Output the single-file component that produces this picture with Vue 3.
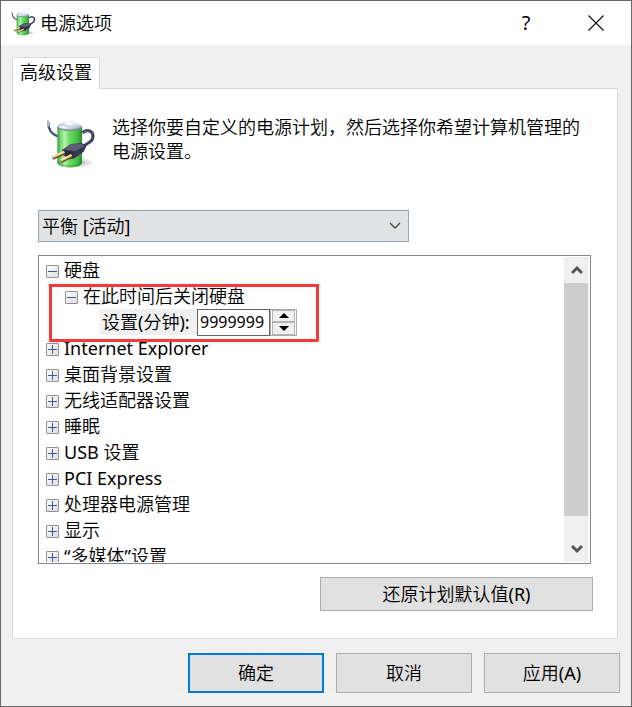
<template>
  <div class="window">
    <svg class="defs" aria-hidden="true">
      <defs>
        <linearGradient id="cell" x1="0" x2="1" y1="0" y2="0">
          <stop offset="0" stop-color="#3d9a45" />
          <stop offset="0.12" stop-color="#6fd36d" />
          <stop offset="0.3" stop-color="#b8f2ad" />
          <stop offset="0.48" stop-color="#6edb64" />
          <stop offset="0.8" stop-color="#46c046" />
          <stop offset="1" stop-color="#278a34" />
        </linearGradient>
        <linearGradient id="metal" x1="0" x2="1" y1="0" y2="1">
          <stop offset="0" stop-color="#8d9ba8" />
          <stop offset="0.45" stop-color="#f4f9ff" />
          <stop offset="1" stop-color="#8794a3" />
        </linearGradient>
        <radialGradient id="shade">
          <stop offset="0" stop-color="#777" stop-opacity="0.6" />
          <stop offset="1" stop-color="#777" stop-opacity="0" />
        </radialGradient>
        <symbol id="battery" viewBox="30 26 150 150">
          <ellipse cx="126" cy="157" rx="48" ry="15" fill="url(#shade)" />
          <path d="M37 38Q37 68 65 78" fill="none" stroke="#4c5570" stroke-width="7" stroke-linecap="round" />
          <path d="M36 32L37 46" stroke="#b4bac6" stroke-width="6" stroke-linecap="round" />
          <path d="M64 50V158Q68 172 101 172T138 158V50Z" fill="url(#cell)" />
          <path d="M65 155Q74 167 101 167T137 155" fill="none" stroke="#23802d" stroke-width="5" opacity="0.4" />
          <ellipse cx="101" cy="50" rx="37" ry="12" fill="#7b8d92" />
          <ellipse cx="101" cy="47" rx="35" ry="11" fill="url(#metal)" />
          <path d="M81 44Q84 32 101 32T121 44Q114 52 101 52T81 44Z" fill="#cad8ed" />
          <ellipse cx="101" cy="38" rx="15" ry="6" fill="#f5faff" />
          <path d="M139 67Q158 54 169 68Q176 88 157 98L139 109" fill="none" stroke="#3c435d" stroke-width="9" />
          <path d="M142 66Q158 58 166 71" fill="none" stroke="#828ba8" stroke-width="2" />
          <path d="M79 118L105 101L138 98L151 108L143 124L116 144L101 147L79 132Z" fill="#34374c" />
          <path d="M82 117L106 102L137 100L146 108L118 123Z" fill="#5a5e76" />
          <path d="M79 118L114 126L113 144L101 147L79 132Z" fill="#282b3f" />
          <path d="M86 128L50 144M108 137L74 154" stroke="#75532a" stroke-width="10" />
          <path d="M85 124L50 140M107 134L74 150" stroke="#f0d9a2" stroke-width="7" />
        </symbol>
      </defs>
    </svg>

    <header class="title-bar">
      <svg class="title-icon" aria-hidden="true"><use href="#battery" /></svg>
      <h1>电源选项</h1>
      <button class="caption-btn" type="button" aria-label="帮助">?</button>
      <button class="caption-btn close" type="button" aria-label="关闭">
        <svg width="16" height="16" viewBox="0 0 16 16"><path d="M0.5 0.5L15.5 15.5M15.5 0.5L0.5 15.5" stroke="#111" stroke-width="1.2" /></svg>
      </button>
    </header>

    <main class="content">
      <div class="tabs" role="tablist">
        <button class="tab" type="button" role="tab" aria-selected="true">高级设置</button>
      </div>

      <section class="panel">
        <div class="intro">
          <svg class="intro-icon" aria-hidden="true"><use href="#battery" /></svg>
          <p>选择你要自定义的电源计划，然后选择你希望计算机管理的电源设置。</p>
        </div>

        <div class="plan">
          <select v-model="plan" aria-label="电源计划">
            <option>平衡 [活动]</option>
          </select>
          <svg class="plan-arrow" width="12" height="8" viewBox="0 0 12 8"><path d="M1 1L6 6L11 1" fill="none" stroke="#444" stroke-width="1.3" /></svg>
        </div>

        <div class="tree-box">
          <ul ref="tree" class="tree">
            <li v-for="item in items" :key="item.name">
              <div class="row">
                <button class="toggle" type="button" :aria-label="item.name" :aria-expanded="item.open" @click="item.open = !item.open">
                  <svg width="9" height="9" viewBox="0 0 9 9"><path :d="item.open ? minus : plus" stroke="#3c569e" /></svg>
                </button>
                <span>{{ item.name }}</span>
              </div>
              <div v-if="item.timeout && item.open" class="branch">
                <div class="row">
                  <button class="toggle" type="button" aria-label="在此时间后关闭硬盘" :aria-expanded="timeoutOpen" @click="timeoutOpen = !timeoutOpen">
                    <svg width="9" height="9" viewBox="0 0 9 9"><path :d="timeoutOpen ? minus : plus" stroke="#3c569e" /></svg>
                  </button>
                  <span>在此时间后关闭硬盘</span>
                </div>
                <div v-if="timeoutOpen" class="row setting">
                  <label for="minutes">设置(分钟):</label>
                  <input id="minutes" v-model.number="minutes" type="text" />
                  <div class="spin">
                    <button type="button" aria-label="增加" @click="minutes++">
                      <svg width="10" height="5" viewBox="0 0 10 5"><path d="M0 5L5 0L10 5Z" /></svg>
                    </button>
                    <button type="button" aria-label="减少" @click="minutes--">
                      <svg width="10" height="5" viewBox="0 0 10 5"><path d="M0 0L5 5L10 0Z" /></svg>
                    </button>
                  </div>
                </div>
                <div class="highlight"></div>
              </div>
            </li>
          </ul>
          <div class="scrollbar">
            <button type="button" aria-label="向上滚动" @click="scroll(-26)">
              <svg width="12" height="10" viewBox="0 0 12 10"><path d="M1 8L6 3L11 8" fill="none" stroke="#555" stroke-width="3" /></svg>
            </button>
            <div class="track"><div class="thumb"></div></div>
            <button type="button" aria-label="向下滚动" @click="scroll(26)">
              <svg width="12" height="10" viewBox="0 0 12 10"><path d="M1 2L6 7L11 2" fill="none" stroke="#555" stroke-width="3" /></svg>
            </button>
          </div>
        </div>

        <button class="btn restore" type="button">还原计划默认值(R)</button>
      </section>
    </main>

    <footer class="actions">
      <button class="btn primary" type="button">确定</button>
      <button class="btn" type="button">取消</button>
      <button class="btn" type="button">应用(A)</button>
    </footer>
  </div>
</template>

<script setup>
import { ref } from 'vue'

const plus = 'M0 4.5H9M4.5 0V9'
const minus = 'M0 4.5H9'

const plan = ref('平衡 [活动]')
const minutes = ref(9999999)
const timeoutOpen = ref(true)
const tree = ref(null)

const items = ref([
  { name: '硬盘', open: true, timeout: true },
  { name: 'Internet Explorer', open: false },
  { name: '桌面背景设置', open: false },
  { name: '无线适配器设置', open: false },
  { name: '睡眠', open: false },
  { name: 'USB 设置', open: false },
  { name: 'PCI Express', open: false },
  { name: '处理器电源管理', open: false },
  { name: '显示', open: false },
  { name: '“多媒体”设置', open: false }
])

function scroll(amount) {
  tree.value.scrollTop += amount
}
</script>

<style>
body {
  margin: 0;
}
</style>

<style scoped>
* {
  box-sizing: border-box;
}

.window {
  display: flex;
  flex-direction: column;
  height: 100vh;
  border: 1px solid #6b6b6b;
  background: #f0f0f0;
  color: #000;
  font-family: "Noto Sans", "Noto Sans CJK SC DemiLight", "Noto Sans CJK SC", sans-serif;
  font-size: 18px;
  line-height: 24px;
}

button,
input,
select {
  margin: 0;
  padding: 0;
  font: inherit;
  color: inherit;
}

.defs {
  position: absolute;
  width: 0;
  height: 0;
}

.title-bar {
  display: flex;
  align-items: center;
  height: 44px;
  padding-left: 10px;
  background: #fff;
}

.title-icon {
  width: 25px;
  height: 25px;
  margin-right: 4px;
}

.title-bar h1 {
  flex: 1;
  margin: 0;
  font-size: 18px;
  font-weight: 400;
}

.caption-btn {
  display: flex;
  align-items: center;
  justify-content: center;
  width: 70px;
  height: 44px;
  border: none;
  background: none;
  font-size: 20px;
}

.content {
  display: flex;
  flex: 1;
  flex-direction: column;
  min-height: 0;
  padding: 12px 13px 0 11px;
}

.tabs {
  display: flex;
}

.tab {
  z-index: 1;
  height: 32px;
  margin-bottom: -1px;
  padding: 0 7px 3px;
  border: 1px solid #d9d9d9;
  border-bottom: none;
  background: #fff;
}

.panel {
  display: flex;
  flex: 1;
  flex-direction: column;
  min-height: 0;
  padding: 26px 25px 27px;
  border: 1px solid #d9d9d9;
  background: #fff;
}

.intro {
  display: flex;
  gap: 16px;
  height: 95px;
  padding-left: 8px;
}

.intro-icon {
  flex: none;
  width: 50px;
  height: 50px;
  margin-top: 4px;
}

.intro p {
  margin: 0;
}

.plan {
  position: relative;
  width: 67%;
  margin-bottom: 13px;
}

.plan select {
  display: block;
  width: 100%;
  height: 32px;
  padding: 0 3px;
  border: 1px solid #9aa5b0;
  border-radius: 0;
  background: #e1e2e3;
  appearance: none;
}

.plan-arrow {
  position: absolute;
  top: 12px;
  right: 8px;
  pointer-events: none;
}

.tree-box {
  display: flex;
  flex: 1;
  min-height: 0;
  margin-right: 1px;
  padding: 1px;
  border: 1px solid #828790;
}

.tree {
  flex: 1;
  margin: 0;
  padding: 0 0 0 6px;
  overflow: hidden;
  list-style: none;
}

.row {
  display: flex;
  align-items: center;
  gap: 5px;
  height: 26px;
}

.toggle {
  display: flex;
  align-items: center;
  justify-content: center;
  width: 13px;
  height: 13px;
  margin-top: 2px;
  border: 1px solid #919191;
  border-radius: 1px;
  background: linear-gradient(135deg, #fff, #ddd);
}

.branch {
  position: relative;
  padding-left: 19px;
}

.setting {
  gap: 0;
  padding-left: 35px;
}

.setting label {
  width: 97px;
  height: 26px;
  padding-top: 1px;
  padding-left: 2px;
  background: #f0f0f0;
  white-space: nowrap;
}

.setting input {
  width: 73px;
  height: 27px;
  padding: 0 2px;
  border: 1px solid #646464;
  border-radius: 0;
  background: #fff;
  font-size: 16px;
}

.spin {
  display: flex;
  flex-direction: column;
  width: 27px;
  height: 27px;
  padding: 0 1px;
  border: 1px solid #aaa;
}

.spin button {
  display: flex;
  flex: 1;
  align-items: center;
  justify-content: center;
  border: 1px solid #b4b4b4;
  background: #f0f0f0;
}

.highlight {
  position: absolute;
  top: 1px;
  left: 3px;
  width: 270px;
  height: 58px;
  border: 3px solid #fb3838;
  pointer-events: none;
}

.scrollbar {
  display: flex;
  flex-direction: column;
  width: 25px;
  background: #f0f0f0;
}

.scrollbar button {
  display: flex;
  align-items: center;
  justify-content: center;
  height: 26px;
  border: none;
  background: none;
}

.track {
  flex: 1;
}

.thumb {
  height: 92%;
  margin-right: 1px;
  background: #cdcdcd;
}

.btn {
  width: 136px;
  height: 40px;
  border: 1px solid #adadad;
  background: #e1e1e1;
}

.btn.primary {
  border: 2px solid #0078d7;
}

.btn.restore {
  align-self: flex-end;
  width: 273px;
  height: 34px;
  margin-top: 13px;
  margin-right: -1px;
}

.actions {
  display: flex;
  justify-content: flex-end;
  gap: 12px;
  padding: 14px 11px 13px;
}
</style>
